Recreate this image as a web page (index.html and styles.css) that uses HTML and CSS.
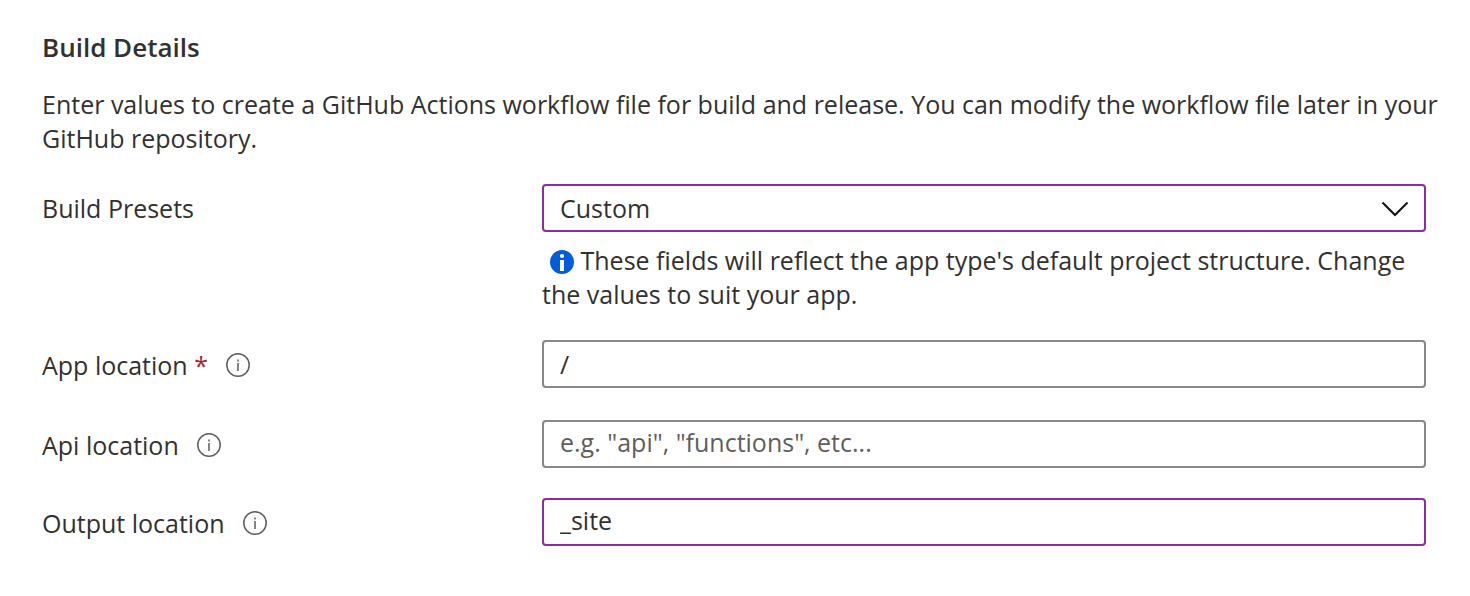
FILE: index.html
```html
<!DOCTYPE html>
<html lang="en">
<head>
<meta charset="utf-8">
<title>Build Details</title>
<link rel="stylesheet" href="styles.css">
</head>
<body>
<main class="panel">
  <h2 class="title">Build Details</h2>
  <p class="intro">Enter values to create a GitHub Actions workflow file for build and release. You can modify the workflow file later in your GitHub repository.</p>
  <form class="form">
    <div class="row row-preset">
      <label class="label" for="preset">Build Presets</label>
      <div class="field">
        <div class="select-wrap">
          <select class="control edited" id="preset"><option>Custom</option></select>
          <svg class="chevron" viewBox="0 0 28 16" aria-hidden="true"><path d="M1.5 1.5 14 14 26.500 1.500"/></svg>
        </div>
        <p class="hint"><svg class="info-solid" viewBox="0 0 24 24" aria-hidden="true"><circle cx="12" cy="12" r="12" fill="#015cda"/><circle cx="12" cy="6" r="2.100" fill="#fff"/><path d="M10 10h4v11h-4z" fill="#fff"/></svg> These fields will reflect the app type's default project structure. Change the values to suit your app.</p>
      </div>
    </div>
    <div class="row row-required">
      <div class="label-group">
        <label class="label" for="app">App location <span class="required">*</span></label>
        <svg class="info" viewBox="0 0 24 24" aria-hidden="true"><circle cx="12" cy="12" r="11.200"/><path d="M12 10v8M12 6.500v2"/></svg>
      </div>
      <input class="control" id="app" type="text" value="/">
    </div>
    <div class="row">
      <div class="label-group">
        <label class="label" for="api">Api location</label>
        <svg class="info" viewBox="0 0 24 24" aria-hidden="true"><circle cx="12" cy="12" r="11.200"/><path d="M12 10v8M12 6.500v2"/></svg>
      </div>
      <input class="control optional" id="api" type="text" placeholder="e.g. &quot;api&quot;, &quot;functions&quot;, etc...">
    </div>
    <div class="row">
      <div class="label-group">
        <label class="label" for="output">Output location</label>
        <svg class="info" viewBox="0 0 24 24" aria-hidden="true"><circle cx="12" cy="12" r="11.200"/><path d="M12 10v8M12 6.500v2"/></svg>
      </div>
      <input class="control optional edited" id="output" type="text" value="_site">
    </div>
  </form>
</main>
</body>
</html>
```
FILE: styles.css
```css
* { box-sizing: border-box; }
body {
  margin: 0;
  background: #fff;
  color: #323130;
  font: 25px/34px "Open Sans", "Noto Sans", sans-serif;
}
.panel { padding: 30px 20px 50px 42px; }
.title { margin: 0; font-size: 26px; font-weight: 600; line-height: 34px; }
.intro { margin: 23px 0 0; }
.form { display: flex; flex-direction: column; gap: 30px; margin: 29px 24px 0 0; }
.row { display: grid; grid-template-columns: 500px 1fr; align-items: center; }
.row-preset { align-items: start; margin-bottom: -1px; }
.row-preset .label { padding-top: 7px; }
.row-required { margin-bottom: 2px; }
.label-group { display: flex; align-items: center; gap: 18px; padding-top: 2px; }
.required { color: #a4262c; }
.select-wrap { position: relative; }
.control {
  display: block;
  width: 100%;
  height: 48px;
  padding: 0 16px;
  border: 2px solid #8a8886;
  border-radius: 4px;
  background: #fff;
  color: inherit;
  font: inherit;
  appearance: none;
}
.optional { padding-bottom: 4px; }
.edited { border-color: #8a2da5; }
.control::placeholder { color: #605e5c; opacity: 1; }
.chevron {
  position: absolute;
  top: 17px;
  right: 17px;
  width: 28px;
  height: 16px;
  fill: none;
  stroke: #111;
  stroke-width: 2;
  pointer-events: none;
}
.hint { margin: 11px 0 0; }
.info-solid { width: 24px; height: 24px; margin-left: 8px; vertical-align: -4px; }
.info { width: 24px; height: 24px; fill: none; stroke: #605e5c; stroke-width: 1.5; }
```
